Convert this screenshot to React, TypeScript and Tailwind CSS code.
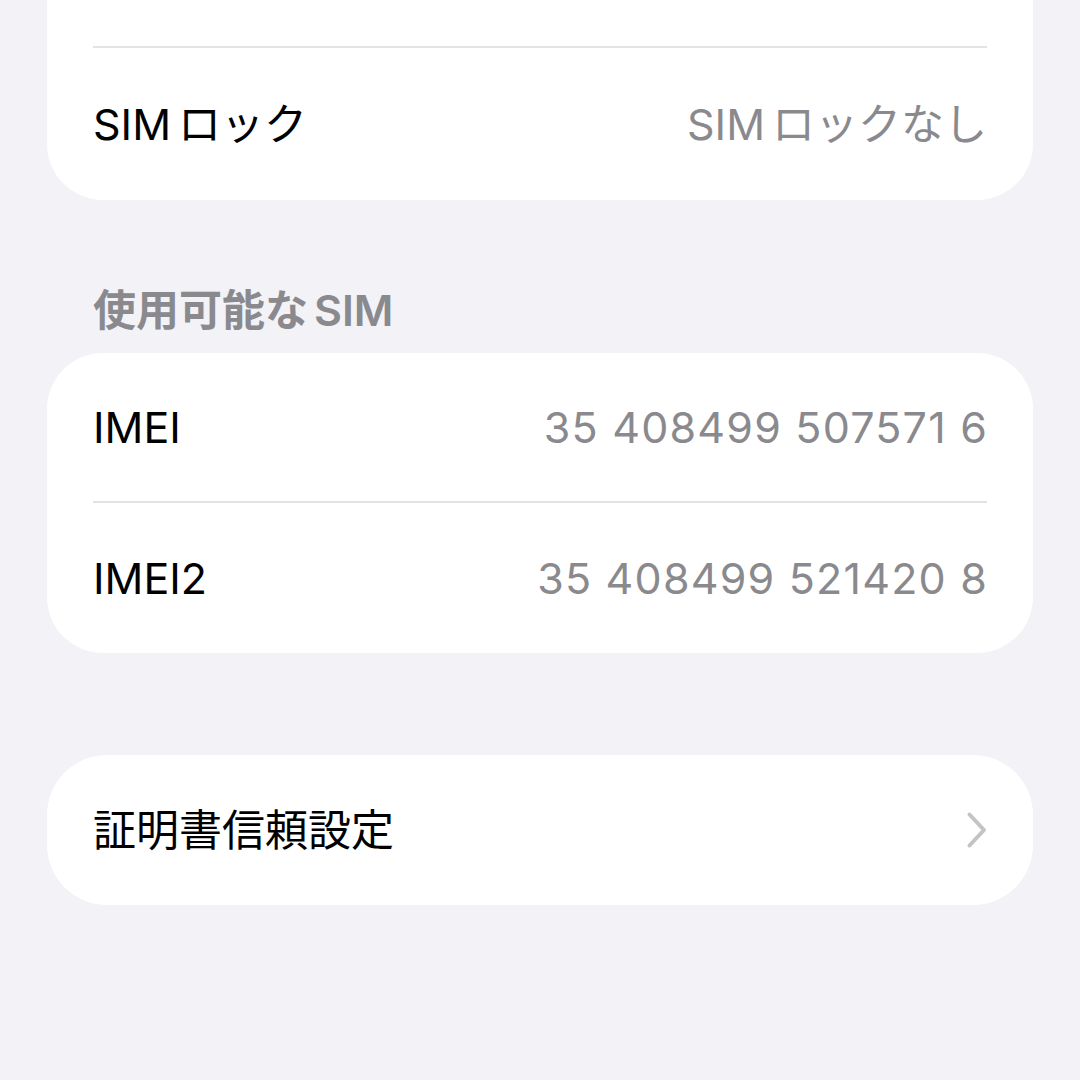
import type { ReactNode } from "react";

const font = { fontFamily: "Inter, 'Noto Sans CJK JP', sans-serif" };

function Row({ label, value, chevron, h, mono }: { label: ReactNode; value?: ReactNode; chevron?: boolean; h: string; mono?: boolean }) {
  return (
    <div className={`flex items-center justify-between px-[46px] ${h}`}>
      <span className="text-[43px] leading-[44px] text-black">{label}</span>
      {value && (
        <span className={`text-[43px] leading-[44px] text-[#8a8a8e] ${mono ? "tracking-[1.2px] mr-[-1px]" : ""}`}>{value}</span>
      )}
      {chevron && (
        <svg width="22" height="38" viewBox="0 0 22 38" className="mr-[-1px]">
          <path d="M3.5 3.5 L18 19 L3.5 34.5" fill="none" stroke="#c4c4c6" strokeWidth="4" strokeLinecap="round" strokeLinejoin="round" />
        </svg>
      )}
    </div>
  );
}

function Divider() {
  return <div className="mx-[46px] h-[2px] bg-[#e3e3e6]" />;
}

function Sim({ rest }: { rest: string }) {
  return (
    <>
      SIM<span className="ml-[7px]">{rest}</span>
    </>
  );
}

export default function App() {
  return (
    <div className="w-[1080px] h-[1080px] overflow-hidden bg-[#f2f2f7] px-[47px]" style={font}>
      <div className="bg-white rounded-b-[56px]">
        <div className="h-[46px]" />
        <Divider />
        <Row label={<Sim rest="ロック" />} value={<Sim rest="ロックなし" />} h="h-[152px]" />
      </div>

      <div className="pt-[88px] pb-[21px] px-[46px] text-[43px] leading-[44px] font-semibold text-[#8a8a8e]">
        使用可能な<span className="ml-[6px]">SIM</span>
      </div>

      <div className="bg-white rounded-[56px]">
        <Row label="IMEI" value="35 408499 507571 6" mono h="h-[148px]" />
        <Divider />
        <Row label="IMEI2" value="35 408499 521420 8" mono h="h-[150px]" />
      </div>

      <div className="mt-[102px] bg-white rounded-[60px]">
        <Row label="証明書信頼設定" chevron h="h-[150px]" />
      </div>
    </div>
  );
}
